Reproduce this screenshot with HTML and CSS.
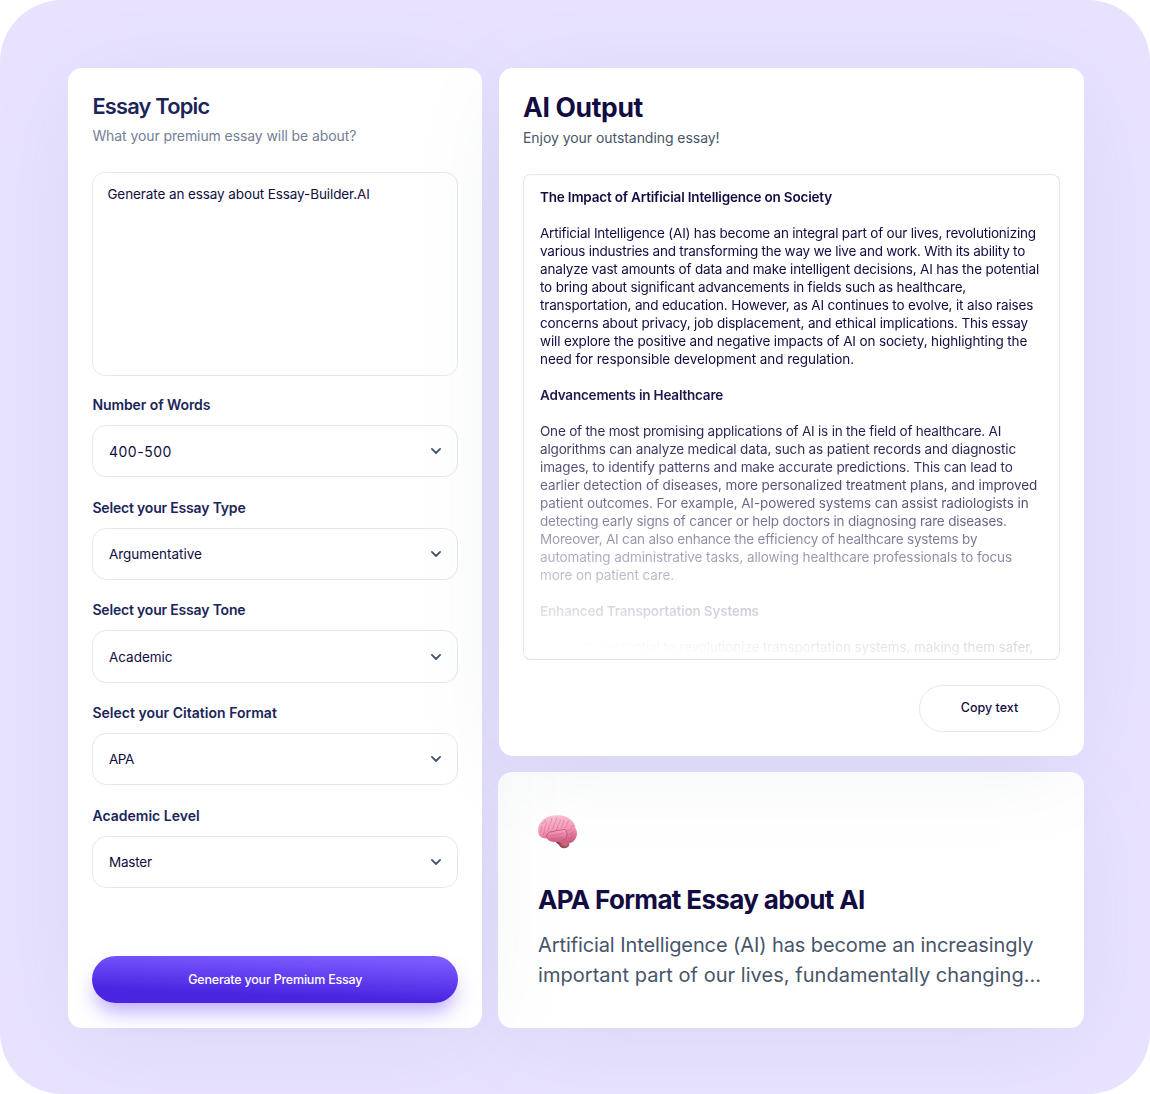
FILE: index.html
```html
<!DOCTYPE html>
<html lang="en">
<head>
<meta charset="utf-8">
<title>Essay Builder</title>
<link rel="stylesheet" href="styles.css">
</head>
<body>
<main class="stage">
  <section class="card form">
    <h2 class="form-title">Essay Topic</h2>
    <p class="form-sub">What your premium essay will be about?</p>
    <div class="prompt">Generate an essay about Essay-Builder.AI</div>

    <div class="field">
      <div class="label">Number of Words</div>
      <div class="select"><span class="digits">400-500</span><svg class="chevron" viewBox="0 0 12 8"><path d="M1.9 1.9 6 6l4.100-4.100"/></svg></div>
    </div>
    <div class="field">
      <div class="label ls18">Select your Essay Type</div>
      <div class="select"><span>Argumentative</span><svg class="chevron" viewBox="0 0 12 8"><path d="M1.9 1.9 6 6l4.100-4.100"/></svg></div>
    </div>
    <div class="field">
      <div class="label ls18">Select your Essay Tone</div>
      <div class="select"><span>Academic</span><svg class="chevron" viewBox="0 0 12 8"><path d="M1.9 1.9 6 6l4.100-4.100"/></svg></div>
    </div>
    <div class="field">
      <div class="label ls00">Select your Citation Format</div>
      <div class="select"><span class="apa">APA</span><svg class="chevron" viewBox="0 0 12 8"><path d="M1.9 1.9 6 6l4.100-4.100"/></svg></div>
    </div>
    <div class="field">
      <div class="label ls00">Academic Level</div>
      <div class="select"><span class="ls18">Master</span><svg class="chevron" viewBox="0 0 12 8"><path d="M1.9 1.9 6 6l4.100-4.100"/></svg></div>
    </div>

    <button class="generate">Generate your Premium Essay</button>
  </section>

  <div class="column">
    <section class="card output">
      <h2 class="output-title">AI Output</h2>
      <p class="output-sub">Enjoy your outstanding essay!</p>
      <div class="essay">
        <div class="essay-text">
          <h3 class="ls18">The Impact of Artificial Intelligence on Society</h3>
          <p>
            <span class="ls21">Artificial Intelligence (AI) has become an integral part of our lives, revolutionizing</span>
            <span class="ls24">various industries and transforming the way we live and work. With its ability to</span>
            <span class="ls17">analyze vast amounts of data and make intelligent decisions, AI has the potential</span>
            <span class="ls18">to bring about significant advancements in fields such as healthcare,</span>
            <span class="ls15">transportation, and education. However, as AI continues to evolve, it also raises</span>
            <span class="ls15">concerns about privacy, job displacement, and ethical implications. This essay</span>
            <span class="ls14">will explore the positive and negative impacts of AI on society, highlighting the</span>
            <span class="ls06">need for responsible development and regulation.</span>
          </p>
          <h3 class="ls21">Advancements in Healthcare</h3>
          <p>
            <span class="ls21">One of the most promising applications of AI is in the field of healthcare. AI</span>
            <span class="ls15">algorithms can analyze medical data, such as patient records and diagnostic</span>
            <span class="ls14">images, to identify patterns and make accurate predictions. This can lead to</span>
            <span class="ls10">earlier detection of diseases, more personalized treatment plans, and improved</span>
            <span class="ls10">patient outcomes. For example, AI-powered systems can assist radiologists in</span>
            <span class="ls18">detecting early signs of cancer or help doctors in diagnosing rare diseases.</span>
            <span class="ls21">Moreover, AI can also enhance the efficiency of healthcare systems by</span>
            <span class="ls08">automating administrative tasks, allowing healthcare professionals to focus</span>
            <span class="ls10">more on patient care.</span>
          </p>
          <h3 class="ls18">Enhanced Transportation Systems</h3>
          <p>
            <span class="ls12">AI has the potential to revolutionize transportation systems, making them safer,</span>
          </p>
        </div>
      </div>
      <button class="copy">Copy text</button>
    </section>

    <section class="card summary">
      <svg class="brain" viewBox="0 0 40 34">
        <defs>
          <linearGradient id="cortex" x1=".4" y1="0" x2=".6" y2="1">
            <stop offset="0" stop-color="#fcc2d2"/><stop offset=".5" stop-color="#f59ab8"/><stop offset="1" stop-color="#cf5b81"/>
          </linearGradient>
          <linearGradient id="lobe" x1="0" y1="0" x2="0" y2="1">
            <stop offset="0" stop-color="#f9a6c0"/><stop offset="1" stop-color="#d35d84"/>
          </linearGradient>
          <radialGradient id="stem" cx=".6" cy=".4" r=".6">
            <stop offset="0" stop-color="#d98088"/><stop offset="1" stop-color="#93434c"/>
          </radialGradient>
        </defs>
        <path d="M17 26.500 23 31.500 27 33 27 26Z" fill="#6d3038"/>
        <ellipse cx="26.200" cy="29" rx="5.200" ry="4.300" fill="url(#stem)"/>
        <path d="M.3 17.500C-.2 11.500 2 6.500 7 3.600 10 1.200 14.500.1 19 .3c5-.4 9.500.8 12.600 3.600 3.500 2.200 5.400 5.500 5.900 9.400 2.200 3.600 1.900 8.500-.7 11.400-1.500 2.500-4.500 4-7.800 3.500-3.800.6-7.500-.4-10-1.400-4 .4-8-.2-9.500-3.300C6 23.500.9 22.500.3 17.500Z" fill="url(#cortex)"/>
        <path d="M8.400 21.800c.2-3.300 3.200-5.400 6.800-5.200 3.600-1.800 7-.8 9.800-2 2.200-.7 3.700.5 3.600 2.600 1 3-.2 6.500-3.200 8-4 1.600-9.500 1.800-13.300.7-2.300-.7-3.600-2.300-3.700-4.100Z" fill="url(#lobe)"/>
        <g class="folds">
          <path d="M1.700 17.500c1.800-1 2-3.600 1.500-5.600M5.300 20c1.800-2 .5-4.300 1.200-6.600.6-2.200 2.300-3 2-5.700M4.500 8.500c1.500-.2 2.800-1.600 3-3.500M9.500 16.500c1.700-1.500 1-4.200 2-6.500.8-2 2.600-3 2.200-6.300M13.800 14.800c1.800-1.200 1.300-3.500 2.300-5.600 1-1.800 2.700-2.700 2.400-6.500M18.500 14.600c1.600-1.500.8-3.600 2-5.400 1.200-1.600 2-2.500 1.700-4.500M22.700 13c2-1.200 1.300-3 2.500-4.500.9-1.100.9-2.500 0-4M26.500 12.800c2.200-.6 3-2.500 2.600-4.600-.1-1 .5-2 1.700-2.200M29.500 15.500c2.300.3 4-1 4.200-3.300.2-1.200 1-1.700 2.200-1.500M30 19.500c2.200.8 4.800-.3 5.300-3M29.500 23.500c2.200 1 5.600 0 6.400-2.600M27 26c2.400.8 5.200.7 7-.6M33 17.500c.9 2 .5 5-.9 6.800"/>
          <path class="fissure" d="M8.400 21.800c.2-3.300 3.200-5.400 6.800-5.200 3.600-1.800 7-.8 9.800-2 2.200-.7 3.700.5 3.600 2.600 1 3-.2 6.500-3.200 8"/>
          <path d="M12 21c2.500-1.800 4.700.2 7-1.300s4.200-.2 6-1.700M13 24c2.200-1.200 4 .3 6.200-.7s3.700.1 5.800-1.300"/>
        </g>
      </svg>
      <h2 class="summary-title">APA Format Essay about AI</h2>
      <p class="summary-text">
        <span class="line-a">Artificial Intelligence (AI) has become an increasingly</span>
        <span class="line-b">important part of our lives, fundamentally changing...</span>
      </p>
    </section>
  </div>
</main>
</body>
</html>
```

FILE: styles.css
```css
* { box-sizing: border-box; }

body {
  margin: 0;
  background: #fff;
  font-family: "Inter", "Liberation Sans", sans-serif;
  color: #120c42;
}

h2, h3, p { margin: 0; }

.stage {
  display: flex;
  gap: 16px;
  width: 1150px;
  height: 1094px;
  padding: 68px 66px 66px 68px;
  border-radius: 62px;
  background: #e8e2ff;
  overflow: hidden;
  isolation: isolate;
}

.card {
  position: relative;
  border-radius: 14px;
  background: #fff;
  box-shadow: 0 14px 90px -20px rgba(108, 136, 152, .17);
}

/* Essay form */
.form {
  z-index: 2;
  display: flex;
  flex-direction: column;
  width: 414px;
  height: 960px;
  padding: 23.500px 24px 25px 24.400px;
}

.form-title {
  font-size: 21.8px;
  font-weight: 600;
  line-height: 28px;
  letter-spacing: -.78px;
  color: #1b2559;
}

.form-sub {
  margin-top: 6.500px;
  font-size: 14px;
  line-height: 20px;
  letter-spacing: -.09px;
  color: #718096;
}

.prompt {
  height: 204px;
  margin-top: 26px;
  padding: 10.800px 14px;
  border: 1px solid #e5e8f1;
  border-radius: 13px;
  font-size: 13.5px;
  line-height: 20px;
  letter-spacing: -.1px;
}

.field { margin-top: 20.400px; }
.prompt + .field { margin-top: 19px; }

.label {
  margin-bottom: 10px;
  font-size: 14px;
  font-weight: 600;
  line-height: 20px;
  letter-spacing: -.08px;
  color: #1b2559;
}

.select {
  display: flex;
  align-items: center;
  justify-content: space-between;
  height: 52.300px;
  padding: 0 14.700px 0 15.500px;
  border: 1px solid #e5e8f1;
  border-radius: 14px;
  font-size: 13.500px;
}

.digits { font-size: 14px; letter-spacing: .53px; }
.apa { letter-spacing: -.4px; }

.chevron {
  width: 12px;
  height: 8px;
  fill: none;
  stroke: #475569;
  stroke-width: 1.8;
  stroke-linecap: round;
  stroke-linejoin: round;
}

button {
  font-family: inherit;
  font-size: 12.500px;
  font-weight: 500;
  cursor: pointer;
}

.generate {
  height: 47px;
  margin-top: auto;
  padding: 0 6px 1px;
  border: 0;
  border-radius: 24px;
  background: linear-gradient(182deg, #7b5aff 10%, #4a25e1 76%);
  box-shadow: 0 12px 20px -4px rgba(117, 81, 255, .5);
  color: #fff;
  letter-spacing: -.21px;
}

/* Right column */
.column {
  display: flex;
  flex-direction: column;
  gap: 16px;
  width: 586px;
}

.output {
  z-index: 3;
  display: flex;
  flex-direction: column;
  height: 688px;
  margin-left: 1px;
  padding: 23px 24px 24px;
}

.output-title {
  font-size: 26.500px;
  font-weight: 700;
  line-height: 32px;
  letter-spacing: -.35px;
}

.output-sub {
  margin-top: 5.400px;
  font-size: 14px;
  line-height: 20px;
  letter-spacing: -.05px;
  color: #475569;
}

.essay {
  height: 486px;
  margin-top: 25.600px;
  padding: 13px 16px 0;
  border: 1px solid #e2e8f0;
  border-bottom-color: #dbe0ea;
  border-radius: 8px;
  overflow: hidden;
}

.essay-text {
  height: 470px;
  font-size: 13.500px;
  line-height: 18px;
  -webkit-mask-image: linear-gradient(185deg, #000 42%, rgba(0, 0, 0, .88) 55%, rgba(0, 0, 0, .65) 66%, rgba(0, 0, 0, .36) 79%, rgba(0, 0, 0, .13) 91%, transparent 97%);
  mask-image: linear-gradient(185deg, #000 42%, rgba(0, 0, 0, .88) 55%, rgba(0, 0, 0, .65) 66%, rgba(0, 0, 0, .36) 79%, rgba(0, 0, 0, .13) 91%, transparent 97%);
}

.essay-text h3 {
  font-size: inherit;
  font-weight: 600;
}

.essay-text p { margin: 18px 0; }

.essay-text span,
.summary-text span {
  display: block;
  white-space: nowrap;
}

.copy {
  align-self: flex-end;
  width: 141px;
  height: 47px;
  margin-top: 25px;
  padding: 0 6px 2px;
  border: 1px solid #e5e8f1;
  border-radius: 24px;
  background: #fff;
  color: #120c42;
}

.summary {
  z-index: 1;
  height: 256px;
  padding: 42.500px 40px 0;
}

.brain {
  display: block;
  width: 40px;
  height: 34px;
}

.folds {
  fill: none;
  stroke: #c95a82;
  stroke-width: .6;
  stroke-linecap: round;
  opacity: .75;
}

.fissure {
  stroke: #a33a60;
  stroke-width: .8;
}

.summary-title {
  margin-top: 35px;
  font-size: 26px;
  font-weight: 700;
  line-height: 32px;
  letter-spacing: -.65px;
}

.summary-text {
  margin-top: 14px;
  font-size: 20px;
  line-height: 30px;
  color: #475569;
}

.line-a { letter-spacing: -.1px; }
.line-b { letter-spacing: .04px; }

/* Tracking steps */
.ls00 { letter-spacing: .02px; }
.ls06 { letter-spacing: -.06px; }
.ls08 { letter-spacing: -.08px; }
.ls10 { letter-spacing: -.1px; }
.ls12 { letter-spacing: -.12px; }
.ls14 { letter-spacing: -.14px; }
.ls15 { letter-spacing: -.153px; }
.ls17 { letter-spacing: -.17px; }
.ls18 { letter-spacing: -.183px; }
.ls21 { letter-spacing: -.206px; }
.ls24 { letter-spacing: -.236px; }
```
